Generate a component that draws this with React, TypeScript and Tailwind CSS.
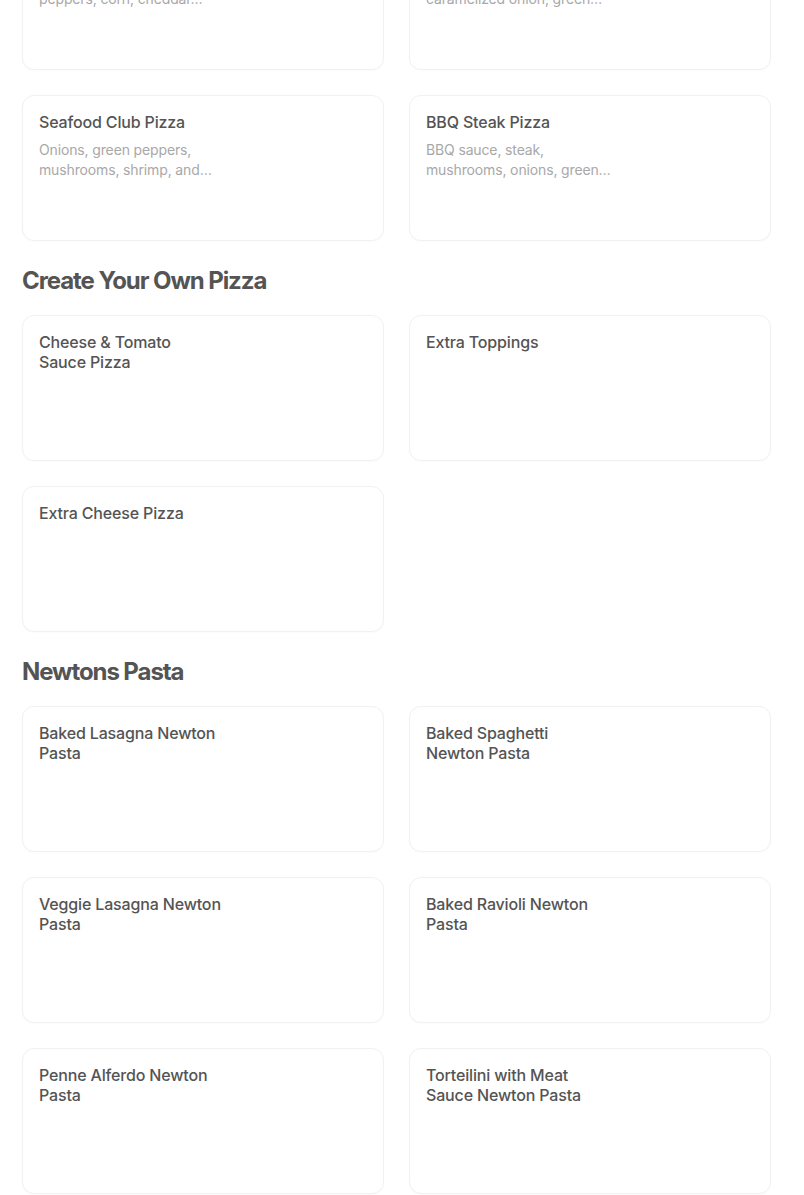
import React from 'react';

interface MenuItem {
  title: string;
  description?: string;
}

interface MenuSection {
  name?: string;
  items: MenuItem[];
}

// line breaks follow the original card layout
const sections: MenuSection[] = [
  {
    items: [
      { title: 'Mexican Pizza', description: 'Jalapenos, onions, green\npeppers, corn, cheddar…' },
      { title: 'Philly Steak Pizza', description: 'Steak, mushrooms,\ncaramelized onion, green…' },
      { title: 'Seafood Club Pizza', description: 'Onions, green peppers,\nmushrooms, shrimp, and…' },
      { title: 'BBQ Steak Pizza', description: 'BBQ sauce, steak,\nmushrooms, onions, green…' },
    ],
  },
  {
    name: 'Create Your Own Pizza',
    items: [
      { title: 'Cheese & Tomato\nSauce Pizza' },
      { title: 'Extra Toppings' },
      { title: 'Extra Cheese Pizza' },
    ],
  },
  {
    name: 'Newtons Pasta',
    items: [
      { title: 'Baked Lasagna Newton\nPasta' },
      { title: 'Baked Spaghetti\nNewton Pasta' },
      { title: 'Veggie Lasagna Newton\nPasta' },
      { title: 'Baked Ravioli Newton\nPasta' },
      { title: 'Penne Alferdo Newton\nPasta' },
      { title: 'Torteilini with Meat\nSauce Newton Pasta' },
    ],
  },
];

const MenuCard: React.FC<{ item: MenuItem }> = ({ item }) => (
  <div className="h-[146px] rounded-xl border border-[#f1f1f1] bg-white p-4 shadow-[0_1px_2px_rgba(0,0,0,0.02)]">
    <div className="w-[200px]">
      <div className="whitespace-pre-line text-[16px] leading-5 font-medium tracking-[-0.01em] text-[#545454]">
        {item.title}
      </div>
      {item.description && (
        <div className="mt-2 whitespace-pre-line text-[14px] leading-5 tracking-[-0.01em] text-[#a8a8a8]">
          {item.description}
        </div>
      )}
    </div>
  </div>
);

export default function App() {
  return (
    <div
      className="min-h-screen bg-white"
      style={{ fontFamily: '"Inter", "Liberation Sans", sans-serif' }}
    >
      <div className="-mt-[76px] w-[749px] ml-[22px] pb-6">
        {sections.map((section, i) => (
          <section key={i}>
            {section.name && (
              <h2 className="mt-6 mb-[18px] text-[24px] leading-8 font-bold tracking-[-0.045em] text-[#545454]">
                {section.name}
              </h2>
            )}
            <div className="grid grid-cols-2 gap-[25px]">
              {section.items.map((item) => (
                <MenuCard key={item.title} item={item} />
              ))}
            </div>
          </section>
        ))}
      </div>
    </div>
  );
}
